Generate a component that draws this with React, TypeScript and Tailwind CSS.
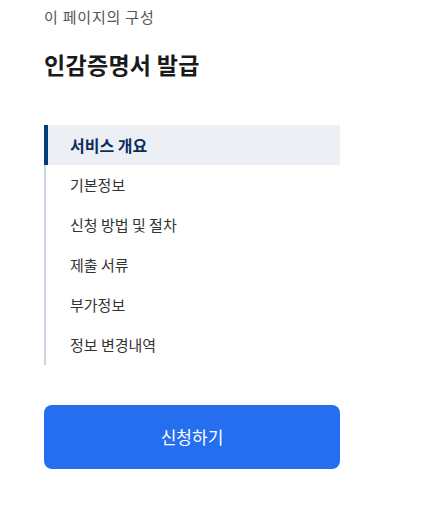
const items = ["서비스 개요", "기본정보", "신청 방법 및 절차", "제출 서류", "부가정보", "정보 변경내역"];

export default function App() {
  return (
    <div
      className="bg-white w-[433px] h-[526px] px-[44px] pt-[6px]"
      style={{ fontFamily: '"Noto Sans CJK KR", "Noto Sans", sans-serif' }}
    >
      <div className="w-[296px]">
        <p className="text-[15px] leading-[22px] text-[#555] tracking-[0.8px]">이 페이지의 구성</p>
        <h1 className="mt-[20px] text-[23px] leading-[32px] font-bold text-[#1a1a1a] tracking-[0.3px]">
          인감증명서 발급
        </h1>
        <nav className="mt-[45px] border-l-2 border-[#cdd6e3]">
          {items.map((item, i) =>
            i === 0 ? (
              <div
                key={item}
                className="-ml-[2px] h-[40px] flex items-center pl-[22px] border-l-4 border-[#063a7f] bg-[#eceff3] text-[16px] font-bold text-[#0b2e5e]"
              >
                {item}
              </div>
            ) : (
              <div key={item} className="h-[40px] flex items-center pl-[24px] text-[15px] text-[#333]">
                {item}
              </div>
            )
          )}
        </nav>
        <button className="mt-[40px] w-full h-[64px] rounded-[8px] bg-[#256ef0] text-white text-[17px]">
          신청하기
        </button>
      </div>
    </div>
  );
}
